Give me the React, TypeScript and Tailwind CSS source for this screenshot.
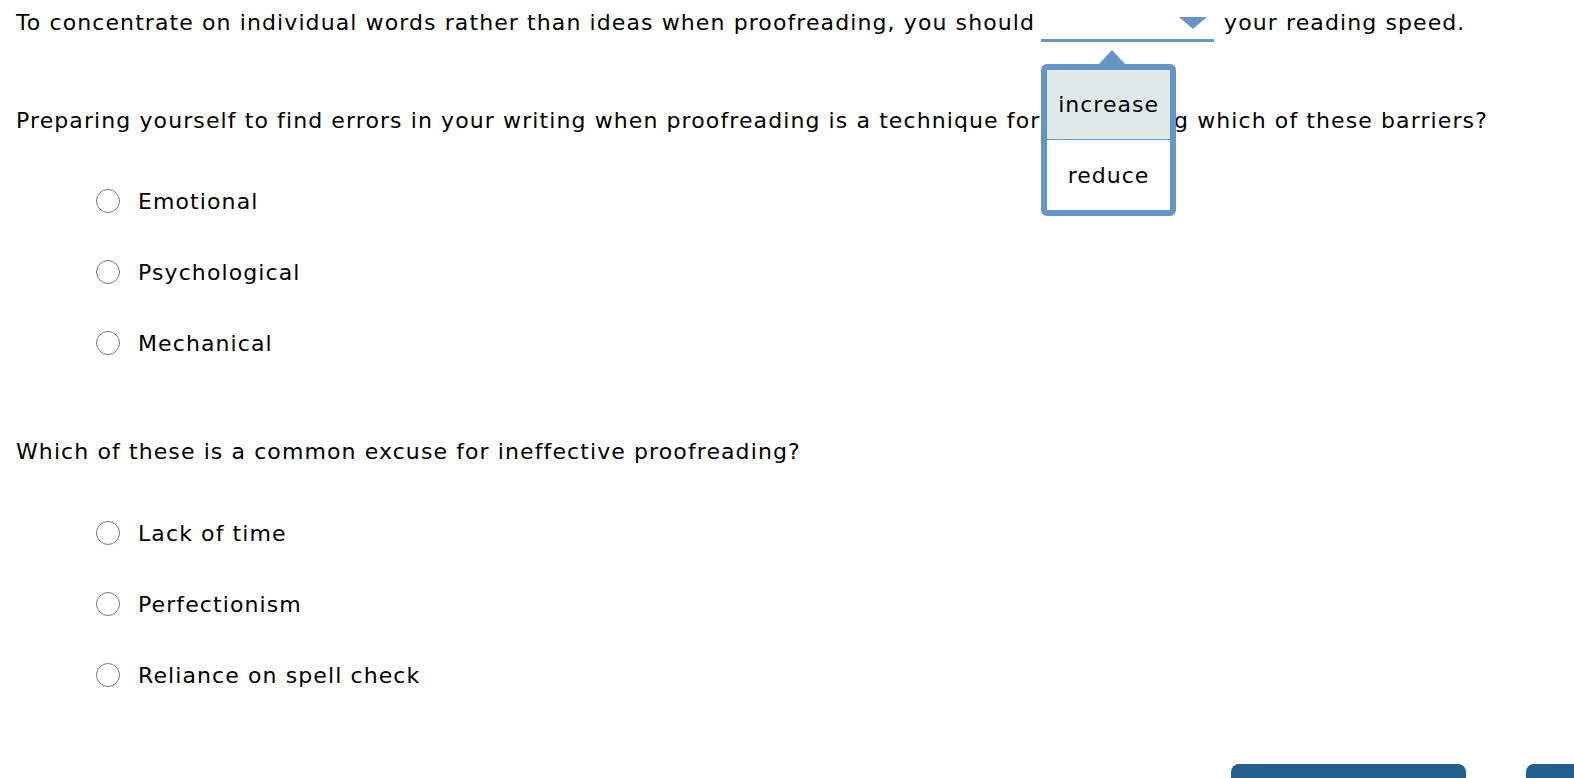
import React from 'react';

const options1 = ['Emotional', 'Psychological', 'Mechanical'];
const options2 = ['Lack of time', 'Perfectionism', 'Reliance on spell check'];

function Radio({ label, first }: { label: string; first?: boolean }) {
  return (
    <label className={`flex items-center h-[44px] ml-[80px] ${first ? '' : 'mt-[27px]'}`}>
      <span className="w-[24px] h-[24px] rounded-full border border-[#767676] bg-white" />
      <span className="ml-[18px]">{label}</span>
    </label>
  );
}

function Dropdown() {
  return (
    <span className="relative inline-block w-[173px] h-[40px] border-b-[3px] border-[#6595c5] align-[-12px] ml-[6px] mr-[10px]">
      <svg
        className="absolute right-[7px] top-[15px]"
        width="28"
        height="12"
        viewBox="0 0 28 12"
      >
        <polygon points="0,0 28,0 14,12" fill="#6595c5" />
      </svg>
      <div className="absolute left-0 top-[62px] w-[135px] z-10">
        <svg
          className="absolute left-[57px] -top-[15px]"
          width="28"
          height="16"
          viewBox="0 0 28 16"
        >
          <polygon points="0,16 14,1 28,16" fill="#6595c5" />
        </svg>
        <div className="border-[6px] border-[#6595c5] rounded-[6px] bg-white tracking-[1px]">
          <div className="h-[70px] bg-[#e1e8ea] border-b border-[#6595c5] flex items-center justify-center">
            increase
          </div>
          <div className="h-[70px] flex items-center justify-center">reduce</div>
        </div>
      </div>
    </span>
  );
}

export default function App() {
  return (
    <div
      className="w-screen h-[778px] overflow-hidden bg-white text-[22px] tracking-[1.1px] text-black"
      style={{ fontFamily: '"DejaVu Sans", Verdana, sans-serif' }}
    >
      <div className="pl-[16px] flex flex-col">
        <div className="h-[44px] flex items-center whitespace-nowrap">
          <span>
            To concentrate on individual words rather than ideas when proofreading, you should
            <Dropdown />
            your reading speed.
          </span>
        </div>

        <div className="h-[44px] mt-[54px] flex items-center whitespace-nowrap">
          Preparing yourself to find errors in your writing when proofreading is a technique for
          overcoming which of these barriers?
        </div>

        <div className="mt-[37px]">
          {options1.map((o, i) => (
            <Radio key={o} label={o} first={i === 0} />
          ))}
        </div>

        <div className="h-[44px] mt-[64px] flex items-center">
          Which of these is a common excuse for ineffective proofreading?
        </div>

        <div className="mt-[38px]">
          {options2.map((o, i) => (
            <Radio key={o} label={o} first={i === 0} />
          ))}
        </div>

        <div className="mt-[67px] flex gap-[60px] ml-[1215px]">
          <button className="w-[235px] h-[44px] shrink-0 rounded-[8px] bg-[#255f90]" />
          <button className="w-[235px] h-[44px] shrink-0 rounded-[8px] bg-[#255f90]" />
        </div>
      </div>
    </div>
  );
}
